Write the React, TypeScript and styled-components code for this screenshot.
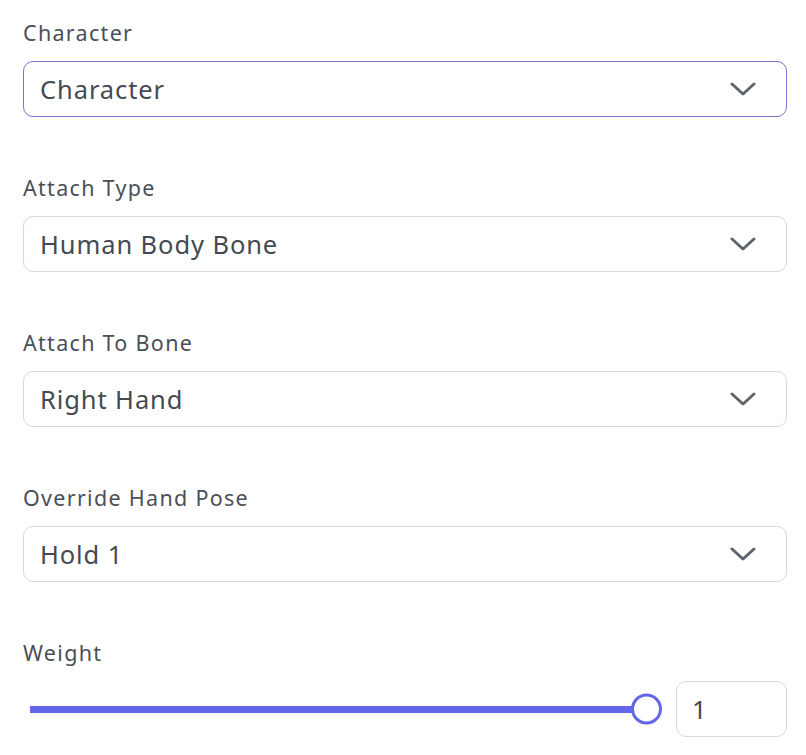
import React from "react";
import styled, { createGlobalStyle } from "styled-components";

const Global = createGlobalStyle`
  html, body { margin: 0; padding: 0; background: #ffffff; }
  body { font-family: "Noto Sans", "Open Sans", sans-serif; color: #4a4f57; }
`;

const Page = styled.div`
  padding: 19px 19px 0 23px;
  display: flex;
  flex-direction: column;
  gap: 57px;
`;

const Field = styled.div`
  display: flex;
  flex-direction: column;
  gap: 14px;
`;

const Label = styled.div`
  font-size: 21.5px;
  line-height: 28px;
  letter-spacing: 1.3px;
  color: #4a4f57;
`;

const SelectBox = styled.div<{ $active?: boolean }>`
  box-sizing: border-box;
  height: 56px;
  border: 1px solid ${(p) => (p.$active ? "#7674d4" : "#d6d8dc")};
  border-radius: 10px;
  display: flex;
  align-items: center;
  justify-content: space-between;
  padding: 0 30px 0 16px;
  font-size: 25.5px;
  letter-spacing: 0.9px;
  color: #454a52;
`;

const Chevron = () => (
  <svg width="26" height="16" viewBox="0 0 26 16" fill="none">
    <path d="M2 3 L13 13 L24 3" stroke="#5f646c" strokeWidth="3" strokeLinecap="round" strokeLinejoin="round" />
  </svg>
);

const SliderRow = styled.div`
  display: flex;
  align-items: center;
  gap: 14px;
`;

const Track = styled.div`
  position: relative;
  flex: 1;
  height: 56px;
  display: flex;
  align-items: center;
  padding-left: 7px;
`;

const Fill = styled.div`
  height: 7px;
  flex: 1;
  background: #6366e8;
  margin-right: 14px;
`;

const Thumb = styled.div`
  position: absolute;
  right: 0;
  top: 50%;
  transform: translateY(-50%);
  box-sizing: border-box;
  width: 31px;
  height: 31px;
  border-radius: 50%;
  border: 3px solid #6366e8;
  background: #ffffff;
`;

const NumberBox = styled.div`
  box-sizing: border-box;
  width: 111px;
  height: 56px;
  border: 1px solid #d6d8dc;
  border-radius: 10px;
  display: flex;
  align-items: center;
  padding-left: 15px;
  font-size: 25.5px;
  color: #454a52;
`;

const selects = [
  { label: "Character", value: "Character", active: true },
  { label: "Attach Type", value: "Human Body Bone" },
  { label: "Attach To Bone", value: "Right Hand" },
  { label: "Override Hand Pose", value: "Hold 1" },
];

export default function App() {
  return (
    <>
      <Global />
      <Page>
        {selects.map((s) => (
          <Field key={s.label}>
            <Label>{s.label}</Label>
            <SelectBox $active={s.active}>
              <span>{s.value}</span>
              <Chevron />
            </SelectBox>
          </Field>
        ))}
        <Field>
          <Label>Weight</Label>
          <SliderRow>
            <Track>
              <Fill />
              <Thumb />
            </Track>
            <NumberBox>1</NumberBox>
          </SliderRow>
        </Field>
      </Page>
    </>
  );
}
